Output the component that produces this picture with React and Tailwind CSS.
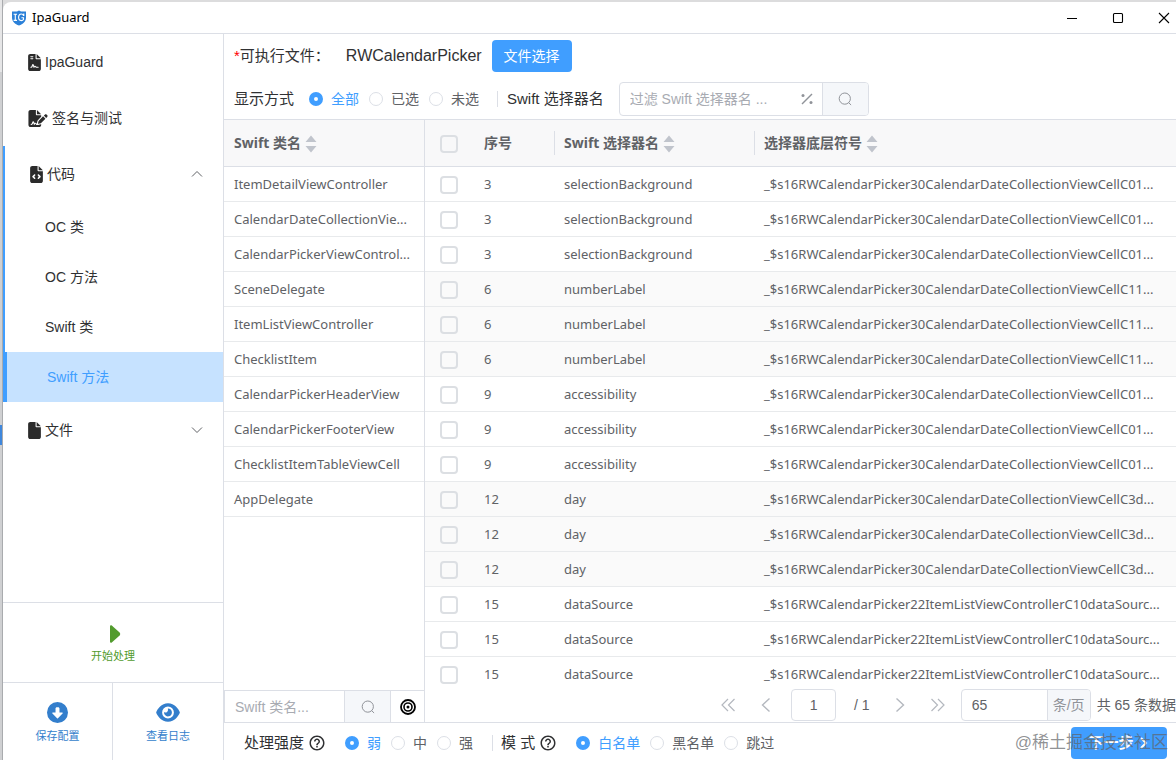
import React from "react";
import { FaFileContract, FaFileSignature, FaFileCode, FaFile, FaCircleDown, FaEye } from "react-icons/fa6";
import { MdHelpOutline } from "react-icons/md";

const classes = [
  "ItemDetailViewController",
  "CalendarDateCollectionVie...",
  "CalendarPickerViewControl...",
  "SceneDelegate",
  "ItemListViewController",
  "ChecklistItem",
  "CalendarPickerHeaderView",
  "CalendarPickerFooterView",
  "ChecklistItemTableViewCell",
  "AppDelegate",
];

const groups = [
  { no: 3, name: "selectionBackground", symbol: "_$s16RWCalendarPicker30CalendarDateCollectionViewCellC01..." },
  { no: 6, name: "numberLabel", symbol: "_$s16RWCalendarPicker30CalendarDateCollectionViewCellC11..." },
  { no: 9, name: "accessibility", symbol: "_$s16RWCalendarPicker30CalendarDateCollectionViewCellC01..." },
  { no: 12, name: "day", symbol: "_$s16RWCalendarPicker30CalendarDateCollectionViewCellC3d..." },
  { no: 15, name: "dataSource", symbol: "_$s16RWCalendarPicker22ItemListViewControllerC10dataSourc..." },
];
const rows = groups.flatMap((g, i) => [0, 1, 2].map((n) => ({ ...g, key: g.no + "-" + n, shaded: i % 2 === 1 })));

const uiFont = "font-['Liberation_Sans','Noto_Sans_CJK_SC',sans-serif]";
const tableFont = "font-['Noto_Sans','Noto_Sans_CJK_SC',sans-serif]";

function Logo() {
  return (
    <svg viewBox="0 0 16 16" className="size-4" aria-hidden="true">
      <path d="M8 0.4 L10 1.4 H15 V7.5 C15 11.5 12 14.2 8 15.6 C4 14.2 1 11.5 1 7.5 V1.4 H6 Z" fill="#2b80d8" />
      <path d="M2.6 4.2 H6 M4.3 4.2 V10.4 M2.6 10.4 H6 M12.6 5.8 C12.2 4.4 11.2 4 10.3 4 C8.6 4 7.6 5.4 7.6 7.3 C7.6 9.2 8.6 10.6 10.3 10.6 C11.2 10.6 12.1 10.2 12.5 9.5 V7.8 H10.4 M12.8 3.6 V6" fill="none" stroke="#fff" strokeWidth="1.1" />
    </svg>
  );
}

function Chevron({ d, size = "size-3", stroke = "#606266", width = 1 }) {
  return (
    <svg viewBox="0 0 12 12" className={"shrink-0 " + size} fill="none" stroke={stroke} strokeWidth={width} aria-hidden="true">
      <path d={d} />
    </svg>
  );
}

function SearchIcon() {
  return (
    <svg viewBox="0 0 14 14" className="size-3.5" fill="none" stroke="#909399" strokeWidth="1" aria-hidden="true">
      <circle cx="6.8" cy="6.6" r="5.6" />
      <path d="M10.6 10.6 L13.1 13" />
    </svg>
  );
}

function SortIcon() {
  return (
    <svg viewBox="0 0 12 18" className="mt-0.5 ml-1 h-[18px] w-3 shrink-0" fill="#c0c4cc" aria-hidden="true">
      <path d="M6 0.5 L11.5 7 H0.5 Z M6 17.5 L11.5 11 H0.5 Z" />
    </svg>
  );
}

function Radio({ name, label, checked, className = "" }) {
  return (
    <label className={"flex items-center gap-2 " + (checked ? "text-[#409eff] " : "text-[#606266] ") + className}>
      <input
        type="radio"
        name={name}
        defaultChecked={checked}
        className="size-3.5 shrink-0 appearance-none rounded-full border border-[#dcdfe6] bg-white checked:border-[5px] checked:border-[#409eff]"
      />
      {label}
    </label>
  );
}

function Check({ label }) {
  return (
    <input
      type="checkbox"
      aria-label={label}
      className="block size-[18px] appearance-none rounded-sm border-2 border-[#dcdfe3] bg-transparent checked:bg-[#409eff]"
    />
  );
}

function SubItem({ children, active }) {
  return (
    <a
      href="#"
      className={
        "flex h-[50px] items-center text-sm " +
        (active ? "border-l-4 border-[#409eff] bg-[#c6e2ff] pl-10 text-[#409eff]" : "pl-[42px] text-[#303133]")
      }
    >
      {children}
    </a>
  );
}

function Sidebar() {
  return (
    <aside className="flex w-[221px] shrink-0 flex-col border-r border-[#dcdfe6] text-[#303133]">
      <nav className="flex-1 text-sm">
        <a href="#" className="flex h-14 items-center gap-1 pl-[25px]">
          <FaFileContract className="h-[17px] w-[13px] text-[#2b2b2b]" />
          IpaGuard
        </a>
        <a href="#" className="flex h-14 items-center gap-1 pl-[25px]">
          <FaFileSignature className="h-[17px] w-5 text-[#2b2b2b]" />
          签名与测试
        </a>
        <div className="relative">
          <span className="absolute top-0 bottom-0 left-0 w-0.5 bg-[#409eff]" />
          <button type="button" className="flex h-14 w-full items-center gap-1 pr-5 pl-[27px]">
            <FaFileCode className="h-[17px] w-[13px] text-[#2b2b2b]" />
            代码
            <span className="ml-auto"><Chevron d="M1 8.5 L6 3.5 L11 8.5" /></span>
          </button>
          <SubItem>OC 类</SubItem>
          <SubItem>OC 方法</SubItem>
          <SubItem>Swift 类</SubItem>
          <SubItem active>Swift 方法</SubItem>
        </div>
        <button type="button" className="flex h-14 w-full items-center gap-1 pr-5 pl-[25px]">
          <FaFile className="h-[17px] w-[13px] text-[#2b2b2b]" />
          文件
          <span className="ml-auto"><Chevron d="M1 3.5 L6 8.5 L11 3.5" /></span>
        </button>
      </nav>
      <button type="button" className="flex h-20 flex-col items-center justify-center gap-[5px] border-t border-[#dcdfe6] pt-[3px] text-[11px] leading-4 text-[#529b2e]">
        <svg viewBox="0 0 12 18" className="ml-1 h-[18px] w-3" fill="#529b2e" aria-hidden="true">
          <path d="M1 1.2 C1 0.3 2 0 2.8 0.6 L10.6 7.6 C11.4 8.4 11.4 9.6 10.6 10.4 L2.8 17.4 C2 18 1 17.7 1 16.8 Z" />
        </svg>
        开始处理
      </button>
      <div className="grid h-[78px] grid-cols-2 border-t border-[#dcdfe6] text-[11px] leading-4 text-[#337ecc]">
        <button type="button" className="flex flex-col items-center justify-center gap-[5px] border-r border-[#dcdfe6] pt-[3px]">
          <FaCircleDown className="size-[21px]" />
          保存配置
        </button>
        <button type="button" className="flex flex-col items-center justify-center gap-[5px] pt-[3px]">
          <FaEye className="h-[21px] w-6" />
          查看日志
        </button>
      </div>
    </aside>
  );
}

function Toolbar() {
  return (
    <div className="shrink-0 pl-2.5 text-[#303133]">
      <div className="flex h-11 items-center">
        <span className="text-[15px]"><span className="text-[#f00]">*</span>可执行文件：</span>
        <span className="ml-4 text-base">RWCalendarPicker</span>
        <button type="button" className="ml-2.5 h-8 rounded bg-[#409eff] px-3 text-sm text-white">文件选择</button>
      </div>
      <div className="flex h-[41px] items-center text-sm">
        <span className="text-[15px]">显示方式</span>
        <Radio name="show" label="全部" checked className="ml-[15px]" />
        <Radio name="show" label="已选" className="ml-2.5" />
        <Radio name="show" label="未选" className="ml-2.5" />
        <span className="mr-[9px] ml-[18px] h-4 w-px bg-[#dcdfe6]" />
        <label htmlFor="filter" className="text-[15px]">Swift 选择器名</label>
        <div className="ml-[15px] flex h-[34px] w-[250px] overflow-hidden rounded border border-[#dcdfe6]">
          <input id="filter" placeholder="过滤 Swift 选择器名 ..." className="min-w-0 flex-1 pl-2.5 text-sm text-[#606266] outline-none placeholder:text-[#a8abb2]" />
          <button type="button" aria-label="正则" className="pr-[9px] pl-2">
            <svg viewBox="0 0 12 12" className="size-3" aria-hidden="true">
              <path d="M1 11 L11 1" stroke="#909399" strokeWidth="1.4" />
              <circle cx="2" cy="2.4" r="1.5" fill="#909399" />
              <circle cx="10" cy="9.6" r="1.5" fill="#909399" />
            </svg>
          </button>
          <button type="button" aria-label="搜索" className="flex w-[46px] items-center justify-center border-l border-[#dcdfe6] bg-[#f5f7fa]"><SearchIcon /></button>
        </div>
      </div>
    </div>
  );
}

function ClassPanel() {
  return (
    <section className="flex w-[201px] shrink-0 flex-col border-r border-[#dcdfe6]">
      <div className="min-h-0 flex-1 overflow-hidden">
        <table className={"w-full table-fixed border-collapse text-left text-[13px] text-[#606266] " + tableFont}>
          <thead>
            <tr className="h-[46px] border-b border-[#dcdfe6] bg-[#f8f8f9] text-sm">
              <th className="px-2.5 font-bold"><span className="flex items-center">Swift 类名<SortIcon /></span></th>
            </tr>
          </thead>
          <tbody>
            {classes.map((c) => (
              <tr key={c} className="h-[35px] border-b border-[#e8eaec]"><td className="pt-[3px] pl-2.5 whitespace-nowrap">{c}</td></tr>
            ))}
          </tbody>
        </table>
      </div>
      <div className="flex h-8 shrink-0 border-t border-[#dcdfe6]">
        <input aria-label="Swift 类名" placeholder="Swift 类名..." className="min-w-0 flex-1 border-l border-[#dcdfe6] pl-2.5 text-sm outline-none placeholder:text-[#a8abb2]" />
        <button type="button" aria-label="搜索" className="flex w-[47px] items-center justify-center border-x border-[#dcdfe6] bg-[#f5f7fa]"><SearchIcon /></button>
        <button type="button" aria-label="定位" className="flex w-[33px] items-center justify-center">
          <svg viewBox="0 0 16 16" className="size-4" fill="none" stroke="#000" aria-hidden="true">
            <circle cx="8" cy="8" r="7" strokeWidth="1.8" />
            <circle cx="8" cy="8" r="4" strokeWidth="1.6" />
            <circle cx="8" cy="8" r="1.5" fill="#000" stroke="none" />
          </svg>
        </button>
      </div>
    </section>
  );
}

function Pager() {
  return (
    <div className="flex h-[34px] shrink-0 items-center justify-end text-sm whitespace-nowrap text-[#606266]">
      <button type="button" aria-label="首页" className="flex">
        <svg viewBox="0 0 16 14" className="h-3.5 w-4" fill="none" stroke="#b4b8bf" strokeWidth="1.2" aria-hidden="true"><path d="M8 1 L2 7 L8 13 M14.5 1 L8.5 7 L14.5 13" /></svg>
      </button>
      <button type="button" aria-label="上一页" className="ml-[23px] flex"><Chevron d="M9 0.5 L3 6 L9 11.5" size="size-3.5" stroke="#b4b8bf" width="1.2" /></button>
      <input aria-label="页码" defaultValue="1" className="ml-[18px] h-8 w-[45px] rounded border border-[#dcdfe6] text-center outline-none" />
      <span className="ml-[18px]">/ 1</span>
      <button type="button" aria-label="下一页" className="ml-[23px] flex"><Chevron d="M3 0.5 L9 6 L3 11.5" size="size-3.5" stroke="#b4b8bf" width="1.2" /></button>
      <button type="button" aria-label="末页" className="ml-[23px] flex">
        <svg viewBox="0 0 16 14" className="h-3.5 w-4" fill="none" stroke="#b4b8bf" strokeWidth="1.2" aria-hidden="true"><path d="M1.5 1 L7.5 7 L1.5 13 M8 1 L14 7 L8 13" /></svg>
      </button>
      <label className="ml-[15px] flex h-8 w-[130px] overflow-hidden rounded border border-[#dcdfe6]">
        <input defaultValue="65" className="min-w-0 flex-1 pl-2.5 outline-none" />
        <span className="flex w-[43px] items-center justify-center border-l border-[#dcdfe6] bg-[#f5f7fa] text-[#909399]">条/页</span>
      </label>
      <span className="ml-1.5">共 65 条数据</span>
    </div>
  );
}

function MethodPanel() {
  return (
    <section className="flex min-w-0 flex-1 flex-col">
      <div className="min-h-0 flex-1 overflow-hidden">
        <table className={"w-full table-fixed border-collapse text-left text-[13px] text-[#606266] " + tableFont}>
          <colgroup>
            <col className="w-[49px]" />
            <col className="w-20" />
            <col className="w-[200px]" />
            <col />
          </colgroup>
          <thead>
            <tr className="h-[46px] border-b border-[#dcdfe6] bg-[#f8f8f9] text-sm">
              <th className="pt-[3px] pl-[15px]"><Check label="全选" /></th>
              <th className="px-2.5">序号</th>
              <th><span className="flex h-6 items-center border-l border-[#dcdfe6] pl-[9px]">Swift 选择器名<SortIcon /></span></th>
              <th><span className="flex h-6 items-center border-l border-[#dcdfe6] pl-[9px]">选择器底层符号<SortIcon /></span></th>
            </tr>
          </thead>
          <tbody>
            {rows.map((r) => (
              <tr key={r.key} className={"h-[35px] border-b border-[#e8eaec] " + (r.shaded ? "bg-[#fafafa]" : "bg-white")}>
                <td className="pt-[3px] pl-[15px]"><Check label={r.name} /></td>
                <td className="px-2.5 pt-[3px]">{r.no}</td>
                <td className="truncate px-2.5 pt-[3px]">{r.name}</td>
                <td className="truncate px-2.5 pt-[3px]">{r.symbol}</td>
              </tr>
            ))}
          </tbody>
        </table>
      </div>
      <Pager />
    </section>
  );
}

function Footer() {
  return (
    <footer className="relative flex h-[38px] shrink-0 items-center border-t border-[#dcdfe6] pt-[3px] pl-5 text-sm text-[#303133]">
      <span className="text-[15px]">处理强度</span>
      <MdHelpOutline className="ml-1 size-[18px]" />
      <Radio name="strength" label="弱" checked className="ml-[19px]" />
      <Radio name="strength" label="中" className="ml-2.5" />
      <Radio name="strength" label="强" className="ml-2.5" />
      <span className="mr-2 ml-[19px] h-4 w-px bg-[#dcdfe6]" />
      <span className="text-[15px]">模 式</span>
      <MdHelpOutline className="ml-1 size-[18px]" />
      <Radio name="mode" label="白名单" checked className="ml-[19px]" />
      <Radio name="mode" label="黑名单" className="ml-2.5" />
      <Radio name="mode" label="跳过" className="ml-2.5" />
      <button type="button" className="mr-[9px] ml-auto flex h-8 w-24 items-center justify-center gap-1 rounded bg-[#409eff] text-[15px] font-bold text-white">
        下一步
        <Chevron d="M3 1 L8 6 L3 11" stroke="#fff" width="2" />
      </button>
      <span className="pointer-events-none absolute top-2 right-2 text-[17px] text-[#606266]/70">@稀土掘金技术社区</span>
    </footer>
  );
}

export default function App() {
  return (
    <div className={"flex h-screen overflow-hidden bg-[#dcdcdd] " + uiFont}>
      <div className="flex w-[3px] shrink-0 flex-col border-r border-[#a9abae] bg-[#cfd0d2]" aria-hidden="true">
        <div className="h-[72px] bg-[#e6e6e7]" />
        <div className="mt-[353px] h-5 bg-[#3f87dc]" />
      </div>
      <div className="mt-0.5 flex min-w-0 flex-1 flex-col rounded-tl-lg bg-white">
        <header className="flex h-8 shrink-0 items-center border-b border-[#dcdfe6] pl-2 text-[13px] text-black">
          <Logo />
          <span className={"ml-[5px] " + tableFont}>IpaGuard</span>
          <div className="ml-auto flex items-center gap-[34px] pr-1.5">
            <button type="button" aria-label="最小化"><svg viewBox="0 0 12 12" className="size-3" aria-hidden="true"><path d="M1 6.5 H11" stroke="#000" /></svg></button>
            <button type="button" aria-label="最大化"><svg viewBox="0 0 12 12" className="size-3" aria-hidden="true"><rect x="1.5" y="1.5" width="9" height="9" rx="1" fill="none" stroke="#000" strokeWidth="1.1" /></svg></button>
            <button type="button" aria-label="关闭"><svg viewBox="0 0 12 12" className="size-3" aria-hidden="true"><path d="M1 1 L11 11 M11 1 L1 11" stroke="#000" strokeWidth="1.1" /></svg></button>
          </div>
        </header>
        <div className="flex min-h-0 flex-1">
          <Sidebar />
          <main className="flex min-w-0 flex-1 flex-col">
            <Toolbar />
            <div className="flex min-h-0 flex-1 border-t border-[#dcdfe6]">
              <ClassPanel />
              <MethodPanel />
            </div>
            <Footer />
          </main>
        </div>
      </div>
    </div>
  );
}
